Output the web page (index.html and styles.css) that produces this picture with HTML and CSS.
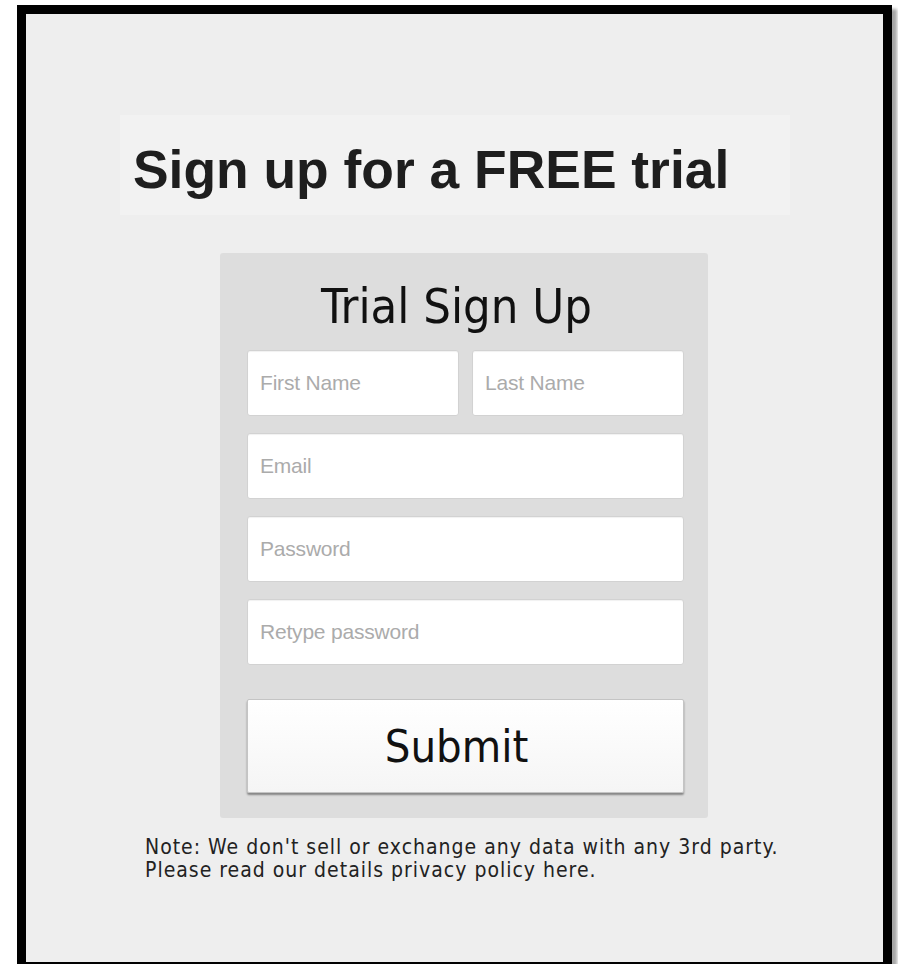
FILE: index.html
```html
<!DOCTYPE html>
<html lang="en">
<head>
<meta charset="utf-8">
<title>Sign up for a FREE trial</title>
<link rel="stylesheet" href="styles.css">
</head>
<body>
  <div class="frame">
    <div class="hero">
      <h1 class="hero-title">Sign up for a FREE trial</h1>
    </div>

    <form class="signup" action="#" onsubmit="return false">
      <h2 class="signup-title">Trial Sign Up</h2>
      <div class="fields">
        <div class="row-split">
          <input class="field" type="text" placeholder="First Name">
          <input class="field" type="text" placeholder="Last Name">
        </div>
        <input class="field" type="email" placeholder="Email">
        <input class="field" type="password" placeholder="Password">
        <input class="field" type="password" placeholder="Retype password">
      </div>
      <button class="submit" type="submit">Submit</button>
    </form>

    <p class="note">Note: We don't sell or exchange any data with any 3rd party.<br>Please read our details privacy policy here.</p>
  </div>
</body>
</html>
```

FILE: styles.css
```css
html, body {
  margin: 0;
  padding: 0;
  background: #ffffff;
  overflow: hidden;
}

/* dark outlined sheet holding the whole page */
.frame {
  margin: 5px 6px 0 17px;
  border: 9px solid #000;
  height: 948px;
  background: #eeeeee;
  box-shadow: 5px 4px 3px rgba(0, 0, 0, 0.35);
  display: flex;
  flex-direction: column;
  align-items: flex-start;
}

.hero {
  margin: 101px 0 0 94px;
  width: 670px;
  height: 100px;
  box-sizing: border-box;
  padding: 28px 13px 0;
  background: #f2f2f2;
}

.hero-title {
  margin: 0;
  font-family: "Liberation Sans", Arial, sans-serif;
  font-weight: bold;
  font-size: 53.4px;
  line-height: 1;
  color: #1e1e1e;
  white-space: nowrap;
}

/* sign-up card */
.signup {
  margin: 38px 0 0 194px;
  width: 488px;
  box-sizing: border-box;
  padding: 25px 24px 25px 27px;
  background: #dddddd;
  border-radius: 3px;
  display: flex;
  flex-direction: column;
}

.signup-title {
  margin: 0 0 16px;
  padding-right: 18px;
  font-family: "DejaVu Sans Condensed", "DejaVu Sans", sans-serif;
  font-stretch: condensed;
  font-weight: normal;
  font-size: 48.5px;
  line-height: 56px;
  color: #111;
  text-align: center;
}

.fields {
  display: flex;
  flex-direction: column;
  gap: 17px;
}

.row-split {
  display: grid;
  grid-template-columns: 1fr 1fr;
  gap: 13px;
}

.field {
  display: block;
  width: 100%;
  height: 66px;
  box-sizing: border-box;
  margin: 0;
  padding: 0 12px;
  border: 1px solid #d2d2d2;
  border-radius: 3px;
  background: #fff;
  box-shadow: inset 0 1px 1px rgba(0, 0, 0, 0.06);
  font-family: "Liberation Sans", Arial, sans-serif;
  font-size: 21px;
  letter-spacing: -0.2px;
  color: #333;
  outline: none;
}

.field::placeholder {
  color: #ababab;
}

.submit {
  margin-top: 34px;
  height: 94px;
  width: 100%;
  box-sizing: border-box;
  padding: 0 18px 0 0;
  border: 1px solid #c4c4c4;
  border-radius: 2px;
  background: linear-gradient(#ffffff, #f5f5f5);
  box-shadow: 0 2px 2px rgba(0, 0, 0, 0.4);
  font-family: "DejaVu Sans Condensed", "DejaVu Sans", sans-serif;
  font-stretch: condensed;
  font-size: 45px;
  color: #111;
  cursor: pointer;
}

.note {
  margin: 18px 0 0 119px;
  font-family: "DejaVu Sans Condensed", "DejaVu Sans", sans-serif;
  font-stretch: condensed;
  font-size: 21px;
  line-height: 23px;
  letter-spacing: 1px;
  color: #222;
}
```
